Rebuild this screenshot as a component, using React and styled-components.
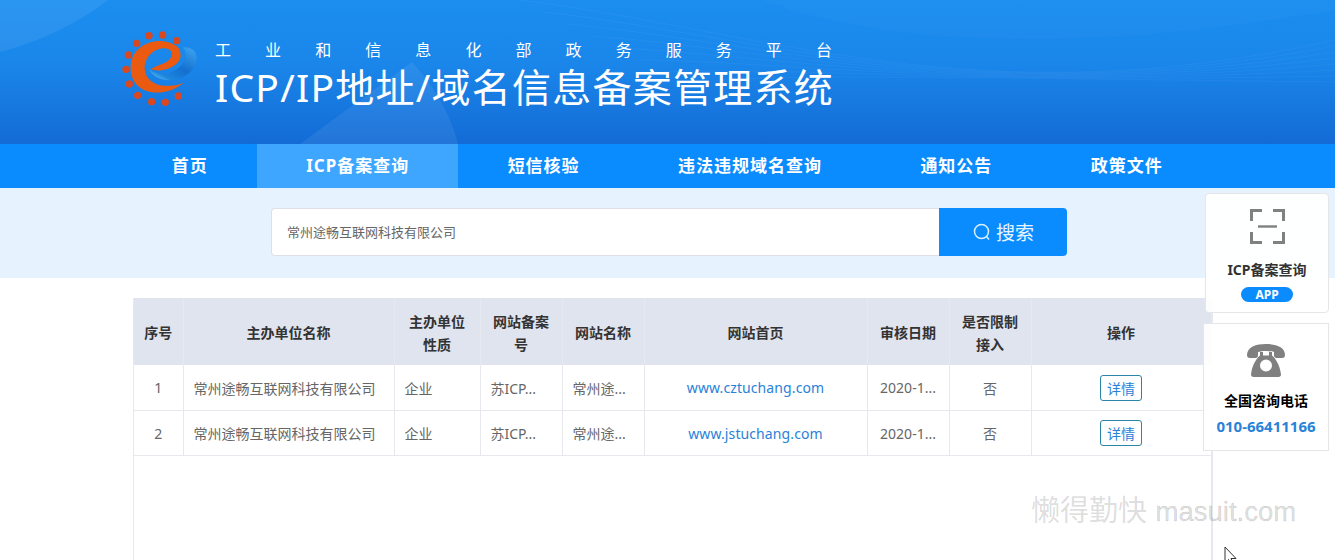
import React from 'react';
import styled, { createGlobalStyle } from 'styled-components';

const FONT = `"Noto Sans", "Noto Sans CJK SC", sans-serif`;

const navItems = ['首页', 'ICP备案查询', '短信核验', '违法违规域名查询', '通知公告', '政策文件'];
const subtitle = '工业和信息化部政务服务平台'.split('');
const columns = [
    { title: '序号', width: 49 },
    { title: '主办单位名称', width: 211 },
    { title: '主办单位性质', width: 86 },
    { title: '网站备案号', width: 82 },
    { title: '网站名称', width: 82 },
    { title: '网站首页', width: 223 },
    { title: '审核日期', width: 82 },
    { title: '是否限制接入', width: 82 },
    { title: '操作', width: 180 },
];
const rows = [
    { id: 1, site: 'www.cztuchang.com' },
    { id: 2, site: 'www.jstuchang.com' },
];

const Logo = () => (
    <LogoSvg viewBox="0 0 270 270" aria-hidden="true">
        <defs>
            <linearGradient id="swoosh" x1="0.9" y1="0" x2="0.1" y2="1">
                <stop offset="0" stopColor="#3ba4ee" />
                <stop offset="0.5" stopColor="#146fd0" />
                <stop offset="0.8" stopColor="#1c86dc" />
                <stop offset="1" stopColor="#6cc6f4" />
            </linearGradient>
        </defs>
        {[[87, 47], [128, 45], [170, 62], [50, 70], [25, 105], [18, 148], [28, 192], [53, 226], [95, 245], [136, 247], [175, 228]].map(([cx, cy]) => (
            <circle key={cx + '-' + cy} cx={cx} cy={cy} r="11" fill="#d9481f" />
        ))}
        <path
            d="M188 82 C238 76 242 132 206 160 C170 190 106 190 84 144 C110 168 150 166 176 144 C198 124 204 100 188 82 Z"
            fill="url(#swoosh)"
        />
        <path
            d="M176 84 C132 42 30 64 32 146 C34 222 126 240 192 188 C140 208 78 198 74 146 C72 110 108 78 142 86 C166 94 158 120 126 132 C112 138 102 140 92 148 C126 160 184 138 182 104 C181 96 179 90 176 84 Z"
            fill="#ea5a10"
        />
    </LogoSvg>
);

const BannerArt = () => (
    <BannerSvg viewBox="0 0 1335 144" preserveAspectRatio="none" aria-hidden="true">
        <path d="M0 52 C40 42 80 22 108 0 L0 0 Z" fill="#ffffff" opacity="0.07" />
        <path d="M300 144 L412 62 C432 84 450 112 458 144 Z" fill="#ffffff" opacity="0.07" />
        <path d="M760 0 C900 50 1100 50 1335 10 L1335 0 Z" fill="#ffffff" opacity="0.02" />
        {[0, 6, 12, 18, 24, 30, 36, 42].map((d) => (
            <path
                key={d}
                d={`M${520 + d * 4} ${d * 2} C760 ${30 + d} 980 ${120 - d} 1335 ${40 + d}`}
                fill="none"
                stroke="#ffffff"
                strokeOpacity="0.04"
            />
        ))}
    </BannerSvg>
);

const App = () => {
    return (
        <Page>
            <GlobalStyle />
            <Banner>
                <BannerArt />
                <Logo />
                <Titles>
                    <Subtitle>
                        {subtitle.map((char, index) => (
                            <span key={index}>{char}</span>
                        ))}
                    </Subtitle>
                    <Title>ICP/IP地址/域名信息备案管理系统</Title>
                </Titles>
            </Banner>
            <Nav>
                {navItems.map((item) => (
                    <NavItem key={item} active={item === 'ICP备案查询' ? 1 : 0}>
                        {item}
                    </NavItem>
                ))}
            </Nav>
            <SearchBand>
                <SearchInput>常州途畅互联网科技有限公司</SearchInput>
                <SearchButton>
                    <svg width="20" height="20" viewBox="0 0 20 20" fill="none" stroke="#d8f0ff" strokeWidth="1.5">
                        <circle cx="9.5" cy="9.5" r="7" />
                        <path d="M14.5 14.5 L17 17.5" />
                    </svg>
                    搜索
                </SearchButton>
            </SearchBand>
            <Main>
                <Table>
                    <colgroup>
                        {columns.map((column) => (
                            <col key={column.title} width={column.width} />
                        ))}
                    </colgroup>
                    <thead>
                        <tr>
                            {columns.map((column) => (
                                <Th key={column.title}>{column.title}</Th>
                            ))}
                        </tr>
                    </thead>
                    <tbody>
                        {rows.map((row) => (
                            <tr key={row.id}>
                                <Td>{row.id}</Td>
                                <Td align="left">常州途畅互联网科技有限公司</Td>
                                <Td align="left">企业</Td>
                                <Td align="left">苏ICP...</Td>
                                <Td align="left">常州途...</Td>
                                <Td>
                                    <SiteLink>{row.site}</SiteLink>
                                </Td>
                                <Td>2020-1...</Td>
                                <Td>否</Td>
                                <Td>
                                    <DetailButton>详情</DetailButton>
                                </Td>
                            </tr>
                        ))}
                    </tbody>
                </Table>
            </Main>
            <ScanCard>
                <svg width="35" height="35" viewBox="0 0 35 35" fill="none" stroke="#808080" strokeWidth="3">
                    <path d="M1.5 12 V1.5 H12 M23 1.5 H33.5 V12 M1.5 23 V33.5 H12 M23 33.5 H33.5 V23" />
                    <path d="M8 17.5 H27" strokeWidth="2.4" />
                </svg>
                <CardTitle>ICP备案查询</CardTitle>
                <AppPill>APP</AppPill>
            </ScanCard>
            <PhoneCard>
                <svg width="38" height="33" viewBox="0 0 38 33" fill="#808080">
                    <path d="M0 11 C0 3 9 0 19 0 C29 0 38 3 38 11 C38 13 37 14 35 14 L29.5 14 C27.5 14 27 12.5 27 11 L27 8 C23 6.5 15 6.5 11 8 L11 11 C11 12.5 10.5 14 8.5 14 L3 14 C1 14 0 13 0 11 Z" />
                    <path
                        fillRule="evenodd"
                        d="M13 8 H16 V11.5 H22 V8 H25 V11.5 C28 13.5 33 21 34 30.5 C34 32 33 33 31.5 33 H6.5 C5 33 4 32 4 30.5 C5 21 10 13.5 13 11.5 Z M19 15.5 A6 6 0 1 0 19 27.5 A6 6 0 1 0 19 15.5 Z"
                    />
                </svg>
                <PhoneLabel>全国咨询电话</PhoneLabel>
                <PhoneNumber>010-66411166</PhoneNumber>
            </PhoneCard>
            <Watermark>
                懒得勤快 <WatermarkLatin>masuit.com</WatermarkLatin>
            </Watermark>
            <Cursor width="14" height="20" viewBox="0 0 14 20">
                <path d="M1 1 V17 L4.5 13.5 L7 19 L9.5 18 L7 12.5 L12 12.5 Z" fill="#fff" stroke="#333" strokeWidth="1" />
            </Cursor>
        </Page>
    );
};

const GlobalStyle = createGlobalStyle`
    html, body {
        margin: 0;
        padding: 0;
        background: #fff;
        font-family: ${FONT};
    }
`;

const Page = styled.div`
    position: relative;
    width: 1335px;
    height: 560px;
    overflow: hidden;
    background: #fff;
`;

const Banner = styled.header`
    position: relative;
    box-sizing: border-box;
    display: flex;
    height: 144px;
    padding: 20px 0 0 120px;
    background: linear-gradient(180deg, #1b8ef0 0%, #1a86ea 45%, #136bd6 100%);
    overflow: hidden;
`;

const BannerSvg = styled.svg`
    position: absolute;
    top: 0;
    left: 0;
    width: 100%;
    height: 100%;
`;

const LogoSvg = styled.svg`
    position: relative;
    flex: none;
    width: 90px;
    height: 90px;
    filter: blur(0.4px);
`;

const Titles = styled.div`
    position: relative;
    display: flex;
    flex-direction: column;
    width: 630px;
    margin-left: 5px;
    padding-top: 19px;
    color: #fff;
`;

const Subtitle = styled.div`
    display: flex;
    justify-content: space-between;
    width: 617px;
    font-size: 16px;
    line-height: 22px;
`;

const Title = styled.h1`
    margin: 3px 0 0;
    font-size: 39px;
    font-weight: 400;
    line-height: 46px;
    letter-spacing: 1.25px;
    white-space: nowrap;
`;

const Nav = styled.nav`
    display: flex;
    height: 44px;
    padding-left: 122.6px;
    background: #0a8cff;
`;

const NavItem = styled.div`
    padding: 0 49.2px;
    font-size: 17px;
    font-weight: 700;
    line-height: 44px;
    letter-spacing: 1px;
    color: #fff;
    background: ${(props) => (props.active ? '#3ea6ff' : 'transparent')};
`;

const SearchBand = styled.div`
    box-sizing: border-box;
    display: flex;
    height: 90px;
    padding: 20px 0 0 271px;
    background: #e6f3ff;
`;

const SearchInput = styled.div`
    box-sizing: border-box;
    width: 668px;
    height: 48px;
    padding-left: 15px;
    font-size: 13px;
    line-height: 46px;
    color: #666;
    background: #fff;
    border: 1px solid #dcdfe6;
    border-right: none;
    border-radius: 4px 0 0 4px;
`;

const SearchButton = styled.div`
    display: flex;
    align-items: center;
    justify-content: center;
    gap: 4px;
    width: 128px;
    height: 48px;
    font-size: 19px;
    color: #e6f6ff;
    background: #0a8cff;
    border-radius: 0 4px 4px 0;
`;

const Main = styled.main`
    box-sizing: border-box;
    width: 1080px;
    height: 262px;
    margin: 20px 0 0 133px;
    border-left: 1px solid #e6e8ee;
    border-right: 2px solid #e6e8ee;
`;

const Table = styled.table`
    width: 1077px;
    table-layout: fixed;
    border-collapse: collapse;
`;

const Th = styled.th`
    box-sizing: border-box;
    height: 67px;
    padding: 2px 10px 0;
    font-size: 14px;
    font-weight: 700;
    line-height: 23px;
    color: #333;
    text-align: center;
    background: #e0e4ef;
    border-right: 1px solid #e6e9f1;
`;

const Td = styled.td`
    box-sizing: border-box;
    height: 45px;
    padding: 1px 10px 0;
    font-size: 14px;
    color: #666;
    text-align: ${(props) => props.align || 'center'};
    white-space: nowrap;
    border-right: 1px solid #e6e8ee;
    border-bottom: 1px solid #e6e8ee;
`;

const SiteLink = styled.a`
    letter-spacing: 0.1px;
    color: #2a82d8;
`;

const DetailButton = styled.span`
    display: inline-block;
    box-sizing: border-box;
    width: 42px;
    height: 26px;
    font-size: 14px;
    line-height: 25px;
    color: #2a82d8;
    text-align: center;
    vertical-align: middle;
    border: 1px solid #2a86a8;
    border-radius: 3px;
`;

const FloatCard = styled.aside`
    position: absolute;
    right: 6px;
    box-sizing: border-box;
    display: flex;
    flex-direction: column;
    align-items: center;
    background: rgba(255, 255, 255, 0.93);
    border: 1px solid #e4e6ea;
`;

const ScanCard = styled(FloatCard)`
    top: 193px;
    width: 124px;
    height: 120px;
    padding-top: 15px;
    border-radius: 4px;
`;

const PhoneCard = styled(FloatCard)`
    top: 323px;
    width: 126px;
    height: 128px;
    padding-top: 20px;
`;

const CardTitle = styled.div`
    margin-top: 16px;
    font-size: 14px;
    font-weight: 700;
    line-height: 20px;
    color: #333;
`;

const AppPill = styled.div`
    width: 52px;
    margin-top: 7px;
    font-size: 12px;
    font-weight: 700;
    line-height: 15px;
    color: #fff;
    text-align: center;
    background: #0a8cff;
    border-radius: 8px;
`;

const PhoneLabel = styled.div`
    margin-top: 14px;
    font-size: 14px;
    font-weight: 700;
    line-height: 20px;
    color: #000;
`;

const PhoneNumber = styled.div`
    margin-top: 5px;
    font-size: 15px;
    font-weight: 700;
    line-height: 20px;
    color: #2a82d8;
`;

const Watermark = styled.div`
    position: absolute;
    left: 1031px;
    top: 490px;
    font-size: 29px;
    line-height: 40px;
    white-space: nowrap;
    color: rgba(0, 0, 0, 0.15);
`;

const WatermarkLatin = styled.span`
    margin-left: 1px;
    font-family: "Liberation Sans", sans-serif;
    font-size: 27.5px;
    -webkit-text-stroke: 0.5px rgba(0, 0, 0, 0.15);
`;

const Cursor = styled.svg`
    position: absolute;
    left: 1224px;
    top: 546px;
`;

export default App;
